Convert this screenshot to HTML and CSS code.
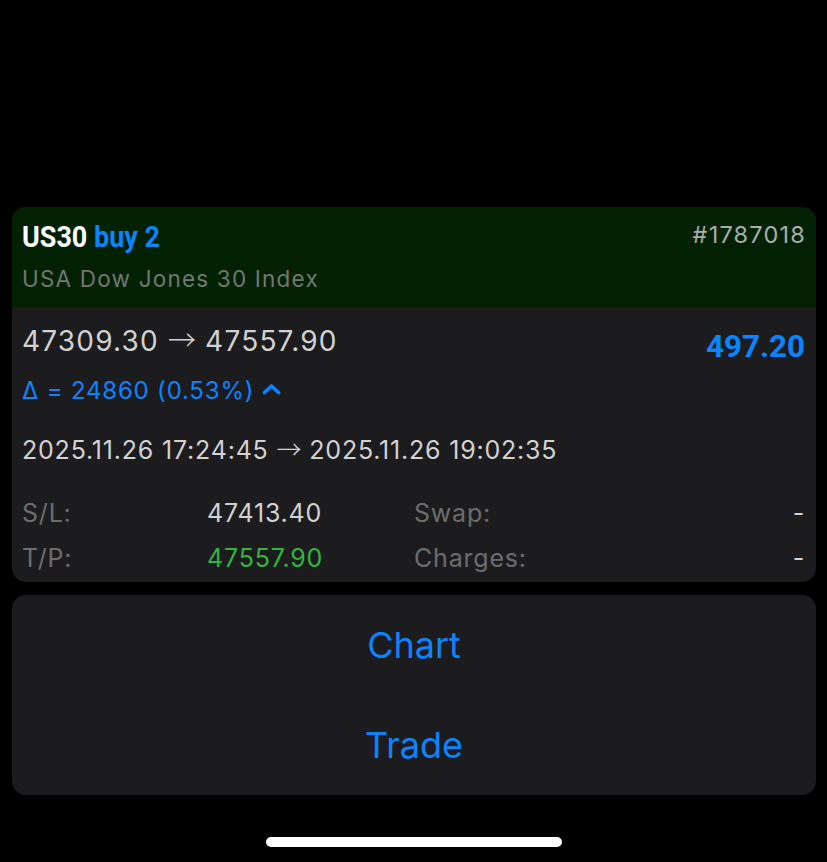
FILE: index.html
```html
<!DOCTYPE html>
<html lang="en">
<head>
    <meta charset="UTF-8">
    <meta name="viewport" content="width=device-width, initial-scale=1.0">
    <title>US30 position</title>
    <link rel="stylesheet" href="styles.css">
</head>
<body>
    <div class="sheet">
        <div class="card">
            <div class="card-head">
                <div class="head-row">
                    <div class="title">US30 <span class="side">buy 2</span></div>
                    <div class="ticket">#1787018</div>
                </div>
                <div class="subtitle">USA Dow Jones 30 Index</div>
            </div>

            <div class="card-body">
                <div class="price-row">
                    <div class="prices">
                        <div class="price-line">47309.30 <span class="arrow">&rarr;</span> 47557.90</div>
                        <div class="delta-line">
                            &Delta; = 24860 (0.53%)
                            <svg class="chevron" width="19" height="12" viewBox="0 0 19 12">
                                <path d="M2.5 9.5 L9.5 3 L16.5 9.5" fill="none" stroke="currentColor" stroke-width="3.6" stroke-linecap="round" stroke-linejoin="round"/>
                            </svg>
                        </div>
                    </div>
                    <div class="profit">497.20</div>
                </div>

                <div class="time-line">2025.11.26 17:24:45 <span class="arrow">&rarr;</span> 2025.11.26 19:02:35</div>

                <div class="details">
                    <span class="label">S/L:</span>
                    <span class="value">47413.40</span>
                    <span class="label">Swap:</span>
                    <span class="value right">-</span>

                    <span class="label">T/P:</span>
                    <span class="value green">47557.90</span>
                    <span class="label">Charges:</span>
                    <span class="value right">-</span>
                </div>
            </div>
        </div>

        <div class="actions">
            <button class="action">Chart</button>
            <button class="action">Trade</button>
        </div>

        <div class="home-bar"></div>
    </div>
</body>
</html>
```

FILE: styles.css
```css
html, body {
    margin: 0;
    background: #000;
}
body {
    font-family: Inter, "Liberation Sans", sans-serif;
    color: #d4d4d4;
}
.sheet {
    padding: 207px 11px 0 12px;
    display: flex;
    flex-direction: column;
}
.card {
    background: #1c1c1e;
    border-radius: 14px;
    overflow: hidden;
}
.card-head {
    background: #022102;
    height: 100px;
    box-sizing: border-box;
    padding: 10px 11px 0 10px;
}
.head-row {
    display: flex;
    justify-content: space-between;
    align-items: flex-start;
}
.title {
    font-family: Roboto, "Liberation Sans", sans-serif;
    font-weight: bold;
    font-size: 29px;
    line-height: 40px;
    color: #fff;
    transform: scaleX(0.93);
    transform-origin: left center;
}
.side {
    color: #0a84ff;
}
.ticket {
    font-size: 23.5px;
    letter-spacing: 1.2px;
    line-height: 35px;
    margin-right: -1px;
    color: #a9aea9;
}
.subtitle {
    margin-top: 2px;
    font-size: 22.5px;
    letter-spacing: 1.2px;
    line-height: 40px;
    color: #717871;
}
.card-body {
    padding: 9px 11px 2px 10px;
}
.price-row {
    display: flex;
    justify-content: space-between;
    align-items: flex-start;
}
.price-line {
    font-size: 28px;
    letter-spacing: 1.2px;
    line-height: 50px;
    height: 50px;
    color: #d2d2d2;
}
.arrow {
    font-family: "Noto Sans CJK SC", sans-serif;
    font-weight: 300;
    letter-spacing: 0;
    line-height: 1;
}
.delta-line {
    font-size: 24px;
    letter-spacing: 0.8px;
    line-height: 49px;
    color: #0a84ff;
    display: flex;
    align-items: center;
    gap: 8px;
}
.chevron {
    margin-top: -3px;
}
.profit {
    font-family: Roboto, "Liberation Sans", sans-serif;
    font-weight: bold;
    font-size: 32px;
    line-height: 61px;
    color: #0a84ff;
    transform: scaleX(0.98);
    transform-origin: right center;
}
.time-line {
    font-size: 25px;
    letter-spacing: 0.8px;
    line-height: 70px;
    height: 70px;
    color: #d2d2d2;
}
.details {
    margin-top: 5px;
    display: grid;
    grid-template-columns: 185px 207px 1fr auto;
    grid-auto-rows: 45px;
    align-items: center;
    font-size: 25px;
    letter-spacing: 0.8px;
}
.label {
    color: #6c6c6c;
}
.value {
    color: #d2d2d2;
}
.value.right {
    text-align: right;
}
.value.green {
    color: #2db83d;
}
.actions {
    margin-top: 13px;
    background: #1c1c1e;
    border-radius: 14px;
    display: flex;
    flex-direction: column;
}
.action {
    height: 100px;
    background: none;
    border: none;
    padding: 0;
    font-family: Inter, "Liberation Sans", sans-serif;
    font-size: 36px;
    color: #0a84ff;
    cursor: pointer;
}
.home-bar {
    align-self: center;
    margin: 42px 0 0 -1px;
    width: 296px;
    height: 10px;
    border-radius: 5px;
    background: #fff;
}
```
